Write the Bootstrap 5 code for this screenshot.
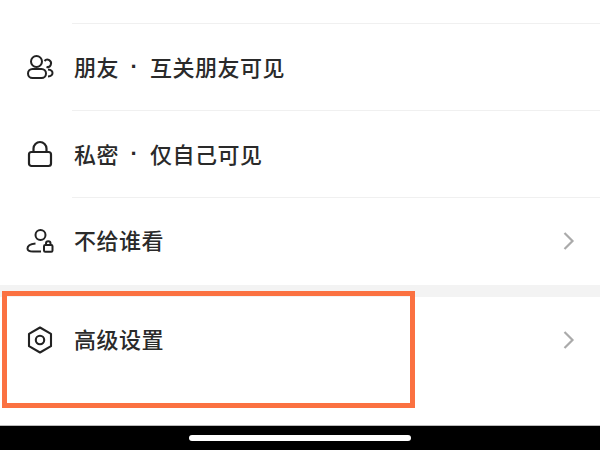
<!DOCTYPE html>
<html lang="zh-CN">
<head>
<meta charset="utf-8">
<title>谁可以看</title>
<link href="https://cdn.jsdelivr.net/npm/bootstrap@5.3.0/dist/css/bootstrap.min.css" rel="stylesheet">
<style>
html, body { width: 600px; height: 450px; overflow: hidden; background: #fff; }
body { font-family: "Noto Sans CJK SC", "Liberation Sans", sans-serif; color: #2a2a2a; }
.screen { width: 600px; height: 450px; }
.lead-gap { height: 24px; margin-left: 72px; border-bottom: 1px solid #f0f0f0; }
.opt-row { height: 87px; }
.opt-icon { width: 72px; flex: none; padding-left: 26px; }
.opt-icon svg { display: block; }
.opt-body { height: 87px; font-size: 22px; font-weight: 500; line-height: 30px; letter-spacing: .5px; padding: 0 24px 4px 2px; }
.opt-line { border-bottom: 1px solid #f0f0f0; padding-bottom: 2px; }
.sep-dot { width: 31px; padding-top: 3px; text-align: center; font-family: "Liberation Sans", sans-serif; font-weight: 700; }
.arrow-wrap { display: block; margin-top: 3px; }
.band { height: 12px; background: #f3f3f3; }
.adv-block { height: 129px; }
.mark-box { position: absolute; left: 2px; top: 291px; width: 413px; height: 117px; border: 5px solid #fb7141; }
.home-strip { height: 25px; background: #000; border-top: 1px solid #bbb; }
.home-bar { width: 222px; height: 6px; border-radius: 3px; background: #fff; }
</style>
</head>
<body>
<div class="screen position-relative d-flex flex-column">
  <div class="lead-gap"></div>

  <div class="opt-row d-flex">
    <div class="opt-icon d-flex align-items-center">
      <svg width="28" height="28" viewBox="0 0 28 28" fill="none" stroke="#222" stroke-width="2"><circle cx="10.500" cy="8.500" r="5.500"/><rect x="2" y="16" width="18" height="9" rx="4.500"/><path d="M18.500 8a3.700 3.700 0 1 1 2 6"/><path d="M22 16.500c2.800.3 4.500 1.700 4.500 3.600 0 2-1.700 3.200-4.500 3.400"/></svg>
    </div>
    <div class="opt-body opt-line flex-grow-1 d-flex align-items-center"><span>朋友</span><span class="sep-dot">·</span><span>互关朋友可见</span></div>
  </div>

  <div class="opt-row d-flex">
    <div class="opt-icon d-flex align-items-center">
      <svg width="28" height="28" viewBox="0 0 28 28" fill="none" stroke="#222" stroke-width="2.200"><rect x="3" y="12" width="22" height="14" rx="2.500"/><path d="M7.500 12V8.500a6.500 6.500 0 0 1 13 0V12"/></svg>
    </div>
    <div class="opt-body opt-line flex-grow-1 d-flex align-items-center"><span>私密</span><span class="sep-dot">·</span><span>仅自己可见</span></div>
  </div>

  <div class="opt-row d-flex">
    <div class="opt-icon d-flex align-items-center">
      <svg width="28" height="28" viewBox="0 0 28 28" fill="none" stroke="#222" stroke-width="2"><circle cx="14.500" cy="8" r="5"/><path d="M9.500 16.500C4.500 17 1.500 19 1.500 21.500c0 2 2.500 3 5.500 3h8"/><rect x="18" y="18" width="8.500" height="6.800" rx="1.200"/><path d="M20 18v-1.500a2.200 2.200 0 0 1 4.500 0V18"/></svg>
    </div>
    <div class="opt-body flex-grow-1 d-flex align-items-center justify-content-between"><span>不给谁看</span>
      <svg class="arrow-wrap" width="14" height="20" viewBox="0 0 14 20" fill="none" stroke="#aaa" stroke-width="2.200"><path d="M2.500 2l8 8-8 8"/></svg>
    </div>
  </div>

  <div class="band"></div>

  <div class="adv-block">
    <div class="opt-row d-flex">
      <div class="opt-icon d-flex align-items-center">
        <svg width="28" height="28" viewBox="0 0 28 28" fill="none" stroke="#222" stroke-width="2.100"><path d="M14 1.500l11 6.300v12.400l-11 6.300-11-6.300V7.800z" stroke-linejoin="round"/><circle cx="14" cy="14" r="4.200"/></svg>
      </div>
      <div class="opt-body flex-grow-1 d-flex align-items-center justify-content-between"><span>高级设置</span>
        <svg class="arrow-wrap" width="14" height="20" viewBox="0 0 14 20" fill="none" stroke="#aaa" stroke-width="2.200"><path d="M2.500 2l8 8-8 8"/></svg>
      </div>
    </div>
  </div>

  <div class="home-strip d-flex justify-content-center align-items-center"><div class="home-bar"></div></div>
  <div class="mark-box"></div>
</div>
<script src="https://cdn.jsdelivr.net/npm/bootstrap@5.3.0/dist/js/bootstrap.bundle.min.js"></script>
</body>
</html>
